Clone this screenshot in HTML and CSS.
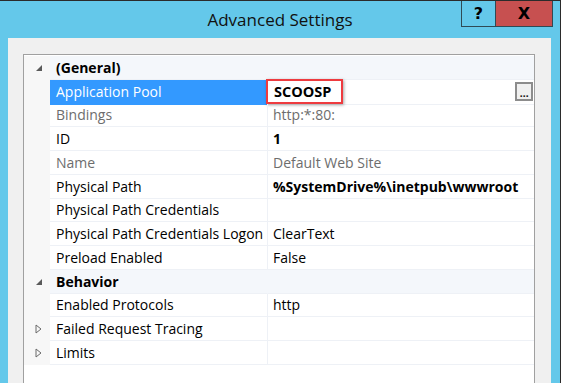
FILE: index.html
```html
<!DOCTYPE html>
<html lang="en">
<head>
    <meta charset="UTF-8">
    <title>Advanced Settings</title>
    <link rel="stylesheet" href="styles.css">
</head>
<body>
    <div class="window">
        <!-- Title bar -->
        <div class="titlebar">
            <div></div>
            <div class="title">Advanced Settings</div>
            <div class="caption-buttons">
                <div class="cap-btn help">?</div>
                <div class="cap-btn close">X</div>
            </div>
        </div>

        <!-- Dialog body -->
        <div class="panel">
            <div class="grid">
                <div class="row category">
                    <div class="margin"><svg class="tri" width="8" height="8" viewBox="0 0 8 8"><polygon points="7,1 7,7 1,7" fill="#5a5a5a"/></svg></div>
                    <div class="name">(General)</div>
                    <div class="value"></div>
                </div>
                <div class="row selected">
                    <div class="margin"></div>
                    <div class="name">Application Pool</div>
                    <div class="value"><span class="callout">SCOOSP</span><span class="ellipsis">...</span></div>
                </div>
                <div class="row disabled">
                    <div class="margin"></div>
                    <div class="name">Bindings</div>
                    <div class="value">http:*:80:</div>
                </div>
                <div class="row">
                    <div class="margin"></div>
                    <div class="name">ID</div>
                    <div class="value bold">1</div>
                </div>
                <div class="row disabled">
                    <div class="margin"></div>
                    <div class="name">Name</div>
                    <div class="value">Default Web Site</div>
                </div>
                <div class="row">
                    <div class="margin"></div>
                    <div class="name">Physical Path</div>
                    <div class="value bold">%SystemDrive%\inetpub\wwwroot</div>
                </div>
                <div class="row">
                    <div class="margin"></div>
                    <div class="name">Physical Path Credentials</div>
                    <div class="value"></div>
                </div>
                <div class="row">
                    <div class="margin"></div>
                    <div class="name">Physical Path Credentials Logon</div>
                    <div class="value">ClearText</div>
                </div>
                <div class="row">
                    <div class="margin"></div>
                    <div class="name">Preload Enabled</div>
                    <div class="value">False</div>
                </div>
                <div class="row category">
                    <div class="margin"><svg class="tri" width="8" height="8" viewBox="0 0 8 8"><polygon points="7,1 7,7 1,7" fill="#5a5a5a"/></svg></div>
                    <div class="name">Behavior</div>
                    <div class="value"></div>
                </div>
                <div class="row">
                    <div class="margin"></div>
                    <div class="name">Enabled Protocols</div>
                    <div class="value">http</div>
                </div>
                <div class="row">
                    <div class="margin"><svg class="tri" width="7" height="10" viewBox="0 0 7 10"><polygon points="1,1 6,5 1,9" fill="none" stroke="#6a6a6a" stroke-width="1"/></svg></div>
                    <div class="name">Failed Request Tracing</div>
                    <div class="value"></div>
                </div>
                <div class="row">
                    <div class="margin"><svg class="tri" width="7" height="10" viewBox="0 0 7 10"><polygon points="1,1 6,5 1,9" fill="none" stroke="#6a6a6a" stroke-width="1"/></svg></div>
                    <div class="name">Limits</div>
                    <div class="value"></div>
                </div>
            </div>
        </div>
    </div>
</body>
</html>
```

FILE: styles.css
```css
/* Reset */
* {
    margin: 0;
    padding: 0;
    box-sizing: border-box;
}

body {
    font-family: "Open Sans", "Noto Sans", sans-serif;
    background-color: #64c8ea;
    overflow: hidden;
}

/* Window frame */
.window {
    width: 561px;
    height: 383px;
    background-color: #64c8ea;
    border-top: 1px solid #2b2b2b;
    border-right: 1px solid #2b2b2b;
    display: flex;
    flex-direction: column;
}

/* Title bar */
.titlebar {
    height: 37px;
    display: grid;
    grid-template-columns: 1fr auto 1fr;
}

.title {
    font-size: 17px;
    color: #111;
    padding-top: 7px;
}

.caption-buttons {
    justify-self: end;
    display: flex;
    height: 26px;
    margin-right: 7px;
    border: 1px solid #2f4a55;
    border-top: none;
}

.cap-btn {
    display: flex;
    justify-content: center;
    align-items: center;
    font-family: "DejaVu Sans", sans-serif;
    font-weight: bold;
    font-size: 16px;
    color: #000;
}

.help {
    width: 34px;
    border-right: 1px solid #2f4a55;
}

.close {
    width: 56px;
    background-color: #c75050;
}

/* Dialog panel */
.panel {
    flex: 1;
    margin-left: 8px;
    margin-right: 9px;
    background-color: #f0f0f0;
    padding: 16px 16px 0 15px;
    display: flex;
}

/* Property grid */
.grid {
    flex: 1;
    background-color: #fff;
    border: 1px solid #a0a0a0;
    border-bottom: none;
    padding-top: 1px;
    font-size: 14px;
}

.row {
    display: grid;
    grid-template-columns: 26px 217px 1fr;
    height: 23.75px;
}

.margin {
    background-color: #f7f7f7;
    display: flex;
    align-items: center;
    padding-left: 11px;
}

.name,
.value {
    display: flex;
    align-items: center;
    white-space: nowrap;
    overflow: hidden;
    border-bottom: 1px solid #eef1f6;
}

.name {
    padding-left: 6px;
    color: #000;
}

.value {
    padding-left: 5px;
    border-left: 1px solid #eef1f6;
    color: #000;
    overflow: visible;
}

.bold {
    font-weight: bold;
}

/* Category rows */
.category .name {
    font-weight: bold;
    background-color: #f4f7fb;
}

.category .value {
    background-color: #f4f7fb;
    border-left-color: #f4f7fb;
}

/* Read-only rows */
.disabled .name,
.disabled .value {
    color: #6d6d6d;
}

/* Selected row */
.selected .name {
    background-color: #3399ff;
    color: #fff;
    border-bottom-color: #3399ff;
}

.selected .value {
    justify-content: space-between;
}

/* Red annotation box */
.callout {
    font-weight: bold;
    font-size: 14.5px;
    margin-left: -7px;
    padding: 0 10px 0 6px;
    height: 25px;
    margin-top: -1px;
    display: flex;
    align-items: center;
    border: 2.5px solid #ee3b3f;
    box-shadow: 1px 1px 3px rgba(0, 0, 0, 0.35);
}

.ellipsis {
    width: 18px;
    height: 19px;
    margin-right: 1px;
    border: 2px solid #8c8c8c;
    background-color: #f0f0f0;
    font-family: "DejaVu Sans", sans-serif;
    font-size: 9px;
    font-weight: bold;
    line-height: 17px;
    padding-top: 2px;
    text-align: center;
    letter-spacing: -0.5px;
    color: #222;
}
```
